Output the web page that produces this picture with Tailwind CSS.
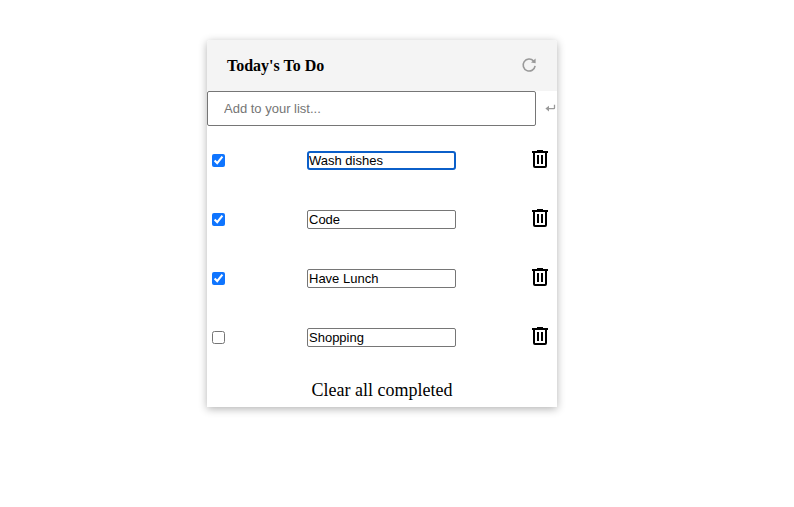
<!DOCTYPE html>
<html lang="en">
<head>
<meta charset="utf-8">
<meta name="viewport" content="width=device-width, initial-scale=1">
<title>Today's To Do</title>
<script src="https://cdn.jsdelivr.net/npm/@tailwindcss/browser@4"></script>
</head>
<body class="min-h-screen bg-white pt-10 pr-[30px] text-black font-['Liberation_Serif','Times_New_Roman',serif]">
<svg class="hidden" aria-hidden="true">
  <symbol id="trash" viewBox="0 0 16 18">
    <path fill="currentColor" fill-rule="evenodd" d="M5 0h6v1h5v2h-1v13a2 2 0 0 1-2 2H3a2 2 0 0 1-2-2V3H0V1h5zM3 3v13h10V3zM5 5h2v9H5zM9 5h2v9H9z"/>
  </symbol>
</svg>
<main class="mx-auto w-full max-w-[350px] rounded-t-[3px] bg-white shadow-[0_2px_8px_rgba(0,0,0,0.3)]">
  <header class="flex h-[51px] items-center justify-between rounded-t-[3px] bg-[#f4f4f4] px-5">
    <h1 class="text-base font-bold">Today's To Do</h1>
    <button type="button" aria-label="Refresh" class="pb-0.5 text-[#999]">
      <svg class="size-4" viewBox="0 0 16 16" fill="none" stroke="currentColor" stroke-width="1.6"><path d="M14.1 8.9A6 6 0 1 1 12.6 4"/><path d="M14.6 1.6v4.6l-4.6-.6z" fill="currentColor" stroke="none"/></svg>
    </button>
  </header>
  <form class="flex items-center justify-between">
    <input type="text" aria-label="Add to your list" placeholder="Add to your list..." class="h-[35px] w-[94%] rounded-[2px] border border-[#767676] bg-white px-4 text-[13px] font-['Liberation_Sans',Arial,sans-serif] placeholder:text-[#757575]">
    <button type="button" aria-label="Add" class="pr-px pb-0.5 text-[#999]">
      <svg class="h-2 w-[11px]" viewBox="0 0 11 8" fill="none" stroke="currentColor" stroke-width="1.3"><path d="M9.5 .8V4a.6.6 0 0 1-.6.6H2"/><path d="M4 1.8v5.6L.4 4.6z" fill="currentColor" stroke="none"/></svg>
    </button>
  </form>
  <ul class="pt-[5px] font-['Liberation_Sans',Arial,sans-serif] text-[13px]">
    <li class="flex h-[59px] items-center justify-between pr-[9px] pl-[5px]">
      <input type="checkbox" checked aria-label="Wash dishes done" class="mr-1.5 size-[13px] accent-[#0f75ff]">
      <input type="text" value="Wash dishes" aria-label="Task 1" class="h-[19px] w-[149px] rounded-[3px] border-2 border-[#0b5fc9] bg-white outline-none">
      <button type="button" aria-label="Delete Wash dishes" class="pb-1"><svg class="h-[18px] w-4"><use href="#trash"/></svg></button>
    </li>
    <li class="flex h-[59px] items-center justify-between pr-[9px] pl-[5px]">
      <input type="checkbox" checked aria-label="Code done" class="mr-1.5 size-[13px] accent-[#0f75ff]">
      <input type="text" value="Code" aria-label="Task 2" class="h-[19px] w-[149px] rounded-[2px] border border-[#767676] bg-white px-px outline-none">
      <button type="button" aria-label="Delete Code" class="pb-1"><svg class="h-[18px] w-4"><use href="#trash"/></svg></button>
    </li>
    <li class="flex h-[59px] items-center justify-between pr-[9px] pl-[5px]">
      <input type="checkbox" checked aria-label="Have Lunch done" class="mr-1.5 size-[13px] accent-[#0f75ff]">
      <input type="text" value="Have Lunch" aria-label="Task 3" class="h-[19px] w-[149px] rounded-[2px] border border-[#767676] bg-white px-px outline-none">
      <button type="button" aria-label="Delete Have Lunch" class="pb-1"><svg class="h-[18px] w-4"><use href="#trash"/></svg></button>
    </li>
    <li class="flex h-[59px] items-center justify-between pr-[9px] pl-[5px]">
      <input type="checkbox" aria-label="Shopping done" class="mr-1.5 size-[13px] accent-[#0f75ff]">
      <input type="text" value="Shopping" aria-label="Task 4" class="h-[19px] w-[149px] rounded-[2px] border border-[#767676] bg-white px-px outline-none">
      <button type="button" aria-label="Delete Shopping" class="pb-1"><svg class="h-[18px] w-4"><use href="#trash"/></svg></button>
    </li>
  </ul>
  <button type="button" class="block w-full pt-2.5 pb-1 text-center text-lg leading-[26px]">Clear all completed</button>
</main>
</body>
</html>
